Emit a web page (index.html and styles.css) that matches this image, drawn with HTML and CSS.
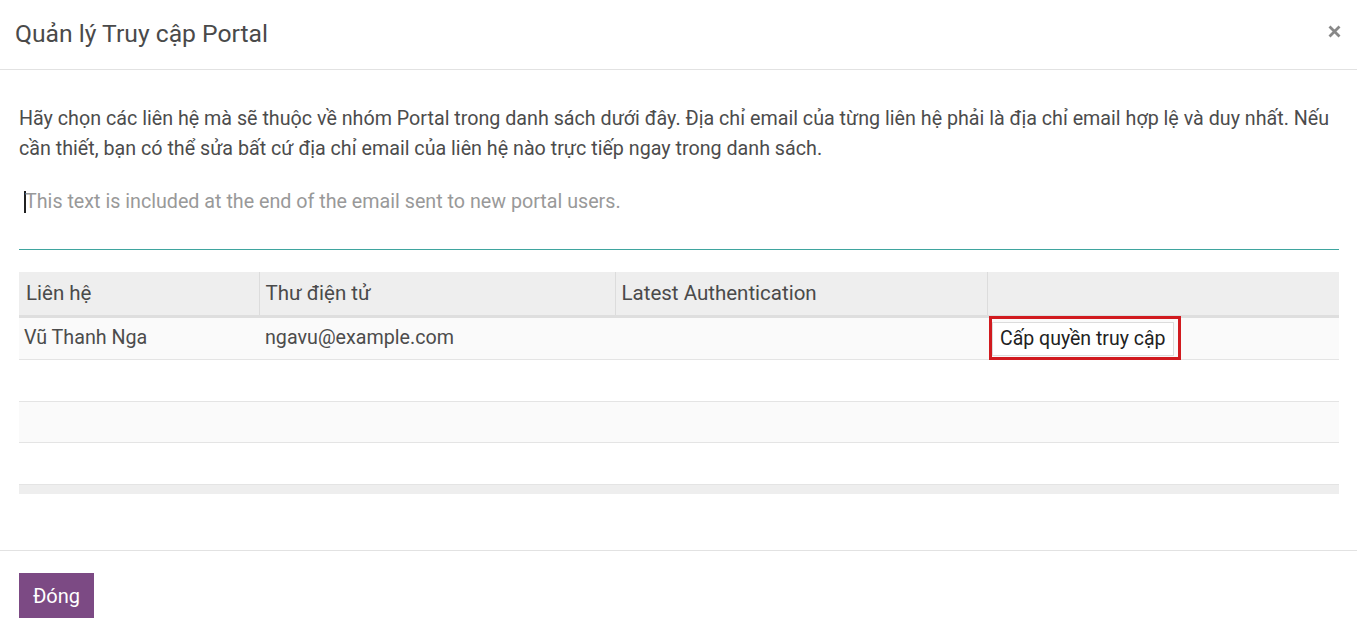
FILE: index.html
```html
<!DOCTYPE html>
<html lang="vi">
<head>
<meta charset="utf-8">
<title>Quản lý Truy cập Portal</title>
<link rel="stylesheet" href="styles.css">
</head>
<body>
<div class="modal">
  <header class="modal-header">
    <h4 class="modal-title">Quản lý Truy cập Portal</h4>
    <button class="close" type="button" aria-label="Close">
      <svg viewBox="0 0 13 13" width="13" height="13"><path d="M1.5 1.5 L11.5 11.5 M11.5 1.5 L1.5 11.5" stroke="#888" stroke-width="2.8" stroke-linecap="butt"/></svg>
    </button>
  </header>
  <main class="modal-body">
    <p class="intro">Hãy chọn các liên hệ mà sẽ thuộc về nhóm Portal trong danh sách dưới đây. Địa chỉ email của từng liên hệ phải là địa chỉ email hợp lệ và duy nhất. Nếu cần thiết, bạn có thể sửa bất cứ địa chỉ email của liên hệ nào trực tiếp ngay trong danh sách.</p>
    <div class="note"><span class="caret"></span><span class="placeholder">This text is included at the end of the email sent to new portal users.</span></div>
    <table class="list">
      <colgroup>
        <col class="c1"><col class="c2"><col class="c3"><col class="c4">
      </colgroup>
      <thead>
        <tr><th>Liên hệ</th><th>Thư điện tử</th><th>Latest Authentication</th><th></th></tr>
      </thead>
      <tbody>
        <tr class="data"><td>Vũ Thanh Nga</td><td>ngavu@example.com</td><td></td><td class="btn-cell"><span class="highlight"><button class="grant" type="button">Cấp quyền truy cập</button></span></td></tr>
        <tr class="empty"><td></td><td></td><td></td><td></td></tr>
        <tr class="empty alt short"><td></td><td></td><td></td><td></td></tr>
        <tr class="empty"><td></td><td></td><td></td><td></td></tr>
      </tbody>
      <tfoot>
        <tr><td></td><td></td><td></td><td></td></tr>
      </tfoot>
    </table>
  </main>
  <footer class="modal-footer">
    <button class="primary" type="button">Đóng</button>
  </footer>
</div>
</body>
</html>
```

FILE: styles.css
```css
* { box-sizing: border-box; }
html, body { margin: 0; padding: 0; background: #fff; }
body {
  font-family: Roboto, "Noto Sans", "DejaVu Sans", sans-serif;
  color: #4c4c4c;
  width: 1357px;
  height: 642px;
  overflow: hidden;
}
.modal { display: flex; flex-direction: column; }
.modal-header {
  height: 70px;
  display: flex;
  align-items: center;
  justify-content: space-between;
  padding: 0 16px 2px 15px;
  border-bottom: 1px solid #e2e2e2;
}
.modal-title {
  margin: 0;
  font-size: 24.7px;
  font-weight: 400;
  color: #4a4a4a;
}
.close {
  border: 0;
  background: none;
  padding: 0;
  width: 14px;
  height: 14px;
  display: flex;
  align-items: center;
  justify-content: center;
  cursor: pointer;
  margin-bottom: 4px;
}
.modal-body { padding: 34px 18px 0 19px; height: 480px; }
.intro {
  margin: 0;
  font-size: 19.7px;
  line-height: 30px;
  color: #4c4c4c;
}
.note {
  margin-top: 23px;
  height: 63px;
  border-bottom: 1px solid #3fa59f;
  display: flex;
  align-items: flex-start;
  padding-left: 5px;
  padding-top: 4px;
}
.caret {
  width: 2px;
  height: 22px;
  background: #222;
  margin-right: -1px;
}
.placeholder { font-size: 19.7px; color: #999; line-height: 22px; }
.list {
  margin-top: 22px;
  width: 100%;
  border-collapse: collapse;
  table-layout: fixed;
  font-size: 19.7px;
}
.c1 { width: 240px; }
.c2 { width: 356px; }
.c3 { width: 372px; }
.list thead th {
  background: #eeeeee;
  height: 44px;
  text-align: left;
  font-size: 20.5px;
  font-weight: 400;
  color: #4a4a4a;
  padding: 0 6px;
  border-left: 1px solid #dcdcdc;
  border-bottom: 3px solid #dedede;
}
.list thead th:first-child { border-left: 0; padding-left: 7px; }
.list td { padding: 0 6px; }
.list td:first-child { padding-left: 5px; }
.list tbody tr { height: 42px; border-bottom: 1px solid #e4e4e4; }
.list tbody tr.short { height: 41px; }
.list tbody tr.data { height: 43px; background: #fafafa; }
.list tbody tr.data td { vertical-align: middle; padding-bottom: 1px; }
.list tbody tr.alt { background: #fafafa; }
.list tfoot tr { height: 10px; background: #eeeeee; }
.btn-cell { padding: 0 !important; }
.highlight {
  display: inline-block;
  vertical-align: middle;
  border: 3px solid #d11a1f;
  padding: 3px 4px 1px 0;
  margin: -2px 0 -2px 2px;
  line-height: 0;
}
.grant {
  font-family: Roboto, "Noto Sans", sans-serif;
  font-size: 19.5px;
  color: #222;
  background: #fff;
  border: 1px solid #dcdcdc;
  padding: 0 7px 0 7px;
  height: 34px;
  line-height: 32px;
}
.modal-footer {
  border-top: 1px solid #e2e2e2;
  padding: 22px 19px 0;
  height: 92px;
}
.primary {
  font-family: Roboto, "Noto Sans", sans-serif;
  background: #7c4a84;
  color: #fff;
  border: 0;
  font-size: 20px;
  width: 75px;
  height: 45px;
  padding: 0;
}
```
